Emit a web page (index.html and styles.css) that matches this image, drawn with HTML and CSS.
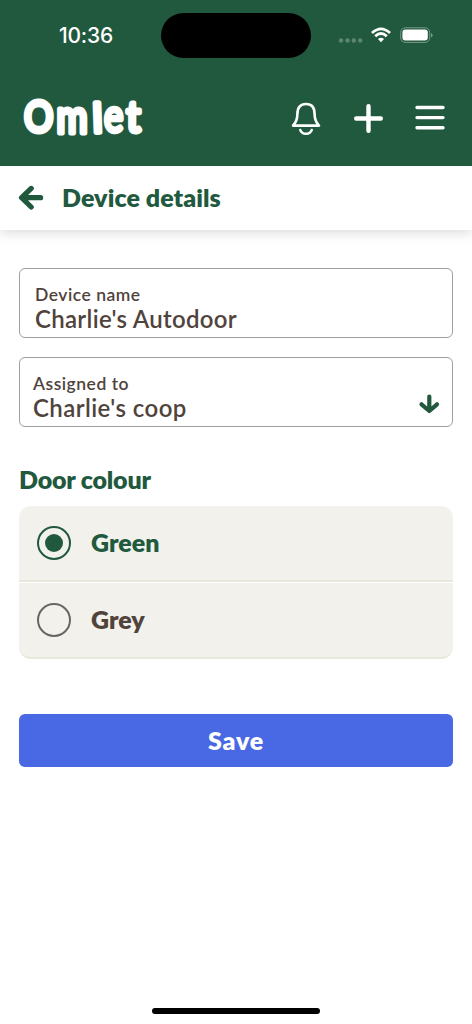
FILE: index.html
```html
<!DOCTYPE html>
<html lang="en">
<head>
<meta charset="utf-8">
<title>Device details</title>
<link rel="stylesheet" href="styles.css">
</head>
<body>
<div class="screen">
  <header class="header">
    <div class="status">
      <span class="time">10:36</span>
      <div class="island"></div>
      <svg class="status-icons" width="96" height="20" viewBox="0 0 96 20">
        <g fill="#5d8671"><circle cx="5" cy="15.5" r="2.2"/><circle cx="11.5" cy="15.5" r="2.2"/><circle cx="17.8" cy="15.5" r="2.2"/><circle cx="24.2" cy="15.5" r="2.2"/></g>
        <g fill="none" stroke="#fff" stroke-width="2.7"><path d="M36 8Q45 -.4 54 8"/><path d="M39.2 11.2Q45 5.8 50.8 11.2"/></g>
        <path d="M42 14Q45 11.4 48 14L45 17.2Z" fill="#fff"/>
        <rect x="64.7" y="2.8" width="29" height="14.6" rx="4.6" fill="none" stroke="#799b89"/>
        <rect x="66.4" y="4.6" width="25.4" height="11" rx="3" fill="#fff"/>
        <path d="M95 8v4.4q1.6-.8 1.6-2.2t-1.6-2.2" fill="#799b89"/>
      </svg>
    </div>
    <nav class="nav">
      <svg class="logo" width="128" height="46" viewBox="0 0 128 46">
        <text class="logo-o" transform="translate(6.2 38) scale(.86 1)">O</text>
        <text class="logo-m" transform="translate(38.4 38.5) scale(.82 1)">m</text>
        <text class="logo-l" transform="translate(75.2 38.5) rotate(-2)">l</text>
        <text class="logo-e" transform="translate(86 37.8) scale(.78 1)">e</text>
        <text class="logo-t" transform="translate(108.4 38) scale(.9 1)">t</text>
      </svg>
      <div class="actions">
        <svg width="30" height="36" viewBox="0 0 30 36" fill="none" stroke="#fff" stroke-width="2.6" stroke-linecap="round" stroke-linejoin="round"><path d="M2 25.6Q6.4 21 6.4 14Q6.4 4 15 4T23.6 14Q23.6 21 28 25.6Z"/><path d="M9.3 30C10.8 35 19.2 35 20.7 30"/></svg>
        <svg width="30" height="36" viewBox="0 0 30 36" stroke="#fff" stroke-width="4.4" stroke-linecap="round"><path d="M15.5 6.2v24.6M3.2 18.5h24.6"/></svg>
        <svg width="30" height="36" viewBox="0 0 30 36" stroke="#fff" stroke-width="3.4" stroke-linecap="round"><path d="M2 7.5h26M2 17.6h26M2 27.8h26"/></svg>
      </div>
    </nav>
  </header>
  <div class="titlebar">
    <svg width="26" height="26" viewBox="0 0 26 26" fill="none" stroke="#21593e" stroke-width="5.2" stroke-linecap="round" stroke-linejoin="round"><path d="M13.2 3.4L3.6 12.7L13.2 22M4 12.7H22.6"/></svg>
    <h1 class="title">Device details</h1>
  </div>
  <main class="content">
    <div class="field field-name">
      <span class="label">Device name</span>
      <span class="value">Charlie's Autodoor</span>
    </div>
    <div class="field field-coop">
      <span class="label">Assigned to</span>
      <span class="value value-coop">Charlie's coop</span>
      <svg class="down" width="22" height="22" viewBox="0 0 22 22" fill="none" stroke="#21593e" stroke-width="4.2" stroke-linecap="round" stroke-linejoin="round"><path d="M3.5 11.3L11.3 18L19 11.3M11.3 17.5V3.5"/></svg>
    </div>
    <h2 class="heading">Door colour</h2>
    <div class="options">
      <div class="option option-on"><span class="radio radio-on"></span><span class="opt-text">Green</span></div>
      <div class="option"><span class="radio"></span><span class="opt-text">Grey</span></div>
    </div>
    <button class="save"><span>Save</span></button>
  </main>
  <div class="home"></div>
</div>
</body>
</html>
```
FILE: styles.css
```css
* { box-sizing: border-box; }
body { margin: 0; background: #fff; font-family: Lato, sans-serif; color: #50433c; }
.screen { width: 472px; height: 1024px; display: flex; flex-direction: column; overflow: hidden; }
.header { height: 166px; background: #21593e; flex: none; }
.status { height: 70px; padding: 13px 40px 0 59px; display: grid; grid-template-columns: 102px 150px 1fr; }
.time { font: 500 21px/45px Inter, sans-serif; color: #fff; letter-spacing: -.2px; }
.island { height: 45px; border-radius: 23px; background: #000; }
.status-icons { justify-self: end; margin-top: 12px; overflow: visible; }
.nav { height: 96px; padding: 24px 27px 0 18px; display: flex; justify-content: space-between; align-items: flex-start; }
.logo { overflow: visible; }
.logo text { font-family: Lato, sans-serif; font-weight: 400; fill: #fff; stroke: #fff; stroke-width: 5.2px; stroke-linejoin: round; stroke-linecap: round; }
.logo .logo-o { font-size: 42px; stroke-width: 5.2px; }
.logo .logo-m { font-size: 46px; }
.logo .logo-l { font-size: 40px; }
.logo .logo-e { font-size: 47px; stroke-width: 4.6px; }
.logo .logo-t { font-size: 43px; }
.actions { display: flex; gap: 32px; padding-top: 6px; }
.actions svg { display: block; }
.titlebar { height: 64px; flex: none; display: flex; align-items: center; padding-left: 18px; gap: 18px; box-shadow: 0 2px 12px rgba(0,0,0,.16); clip-path: inset(0 0 -20px 0); }
.title { margin: -2px 0 0; font-size: 25px; line-height: 30px; letter-spacing: .07px; font-weight: 800; color: #21593e; white-space: nowrap; }
.content { padding: 38px 19px 0; display: flex; flex-direction: column; }
.field { height: 70px; border: 1.5px solid #a09da4; border-radius: 6px; position: relative; display: flex; flex-direction: column; padding-top: 14px; margin-bottom: 19px; white-space: nowrap; }
.field-name { padding-left: 15px; }
.field-coop { padding-left: 13px; }
.label { font-size: 17.5px; line-height: 23px; font-weight: 600; letter-spacing: .5px; }
.value { font-size: 24px; line-height: 25px; font-weight: 600; letter-spacing: .3px; }
.value-coop { letter-spacing: .42px; }
.down { position: absolute; right: 12px; top: 35px; }
.heading { margin: 18px 0 12px; font-size: 25px; line-height: 30px; letter-spacing: -.2px; font-weight: 800; color: #21593e; align-self: flex-start; }
.options { height: 153px; border-radius: 12px; background: #f2f1eb; overflow: hidden; border-bottom: 2px solid #e8e8dc; }
.option { height: 76px; display: flex; align-items: center; gap: 20px; padding-left: 18px; font-size: 25px; line-height: 30px; font-weight: 800; }
.option-on { height: 76px; border-bottom: 2px solid #e8e8dc; box-shadow: 0 1px 0 #fff; color: #21593e; }
.opt-text { margin-top: -2px; }
.radio { width: 34px; height: 34px; border: 2px solid #666; border-radius: 50%; display: grid; place-items: center; }
.radio-on { border-color: #21593e; }
.radio-on::after { content: ""; width: 18px; height: 18px; border-radius: 50%; background: #21593e; }
.save { margin-top: 55px; height: 53px; border: 0; border-radius: 6px; background: #4968e3; color: #fff; font: 800 25px/30px Lato, sans-serif; letter-spacing: .8px; padding: 0 0 1px; }
.home { width: 168px; height: 6px; border-radius: 3px; background: #000; margin: auto auto 10px; }
```
